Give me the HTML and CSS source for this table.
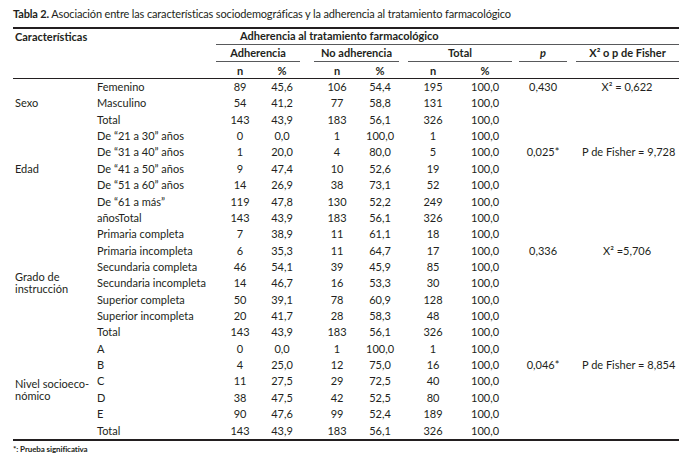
FILE: index.html
```html
<!DOCTYPE html>
<html lang="es">
<head>
<meta charset="utf-8">
<link rel="stylesheet" href="styles.css">
</head>
<body>
<div class="page">
  <p class="caption"><b>Tabla 2.</b> Asociación entre las características sociodemográficas y la adherencia al tratamiento farmacológico</p>
  <table class="tbl">
    <colgroup>
      <col class="c-group"><col class="c-sub"><col class="c-n1"><col class="c-p1"><col class="c-n2"><col class="c-p2"><col class="c-n3"><col class="c-p3"><col class="c-pv"><col class="c-fi">
    </colgroup>
    <thead>
      <tr class="h1">
        <th class="lab" colspan="2" rowspan="3">Características</th>
        <th class="span-all" colspan="8">Adherencia al tratamiento farmacológico</th>
      </tr>
      <tr class="h2">
        <th colspan="2"><div class="ul ul-a">Adherencia</div></th>
        <th colspan="2" class="n2"><div class="ul ul-b">No adherencia</div></th>
        <th colspan="2"><div class="ul ul-c">Total</div></th>
        <th><div class="ul ul-d"><i>p</i></div></th>
        <th class="fi"><div class="ul ul-e">X² o p de Fisher</div></th>
      </tr>
      <tr class="h3">
        <th>n</th><th>%</th><th class="n2">n</th><th>%</th><th>n</th><th>%</th><th></th><th class="fi"></th>
      </tr>
    </thead>
    <tbody>
      <tr><td class="grp" rowspan="3">Sexo</td><td class="sub">Femenino</td><td>89</td><td>45,6</td><td class="n2">106</td><td>54,4</td><td>195</td><td>100,0</td><td>0,430</td><td class="fi">X² = 0,622</td></tr>
      <tr><td class="sub">Masculino</td><td>54</td><td>41,2</td><td class="n2">77</td><td>58,8</td><td>131</td><td>100,0</td><td></td><td class="fi"></td></tr>
      <tr><td class="sub">Total</td><td>143</td><td>43,9</td><td class="n2">183</td><td>56,1</td><td>326</td><td>100,0</td><td></td><td class="fi"></td></tr>

      <tr><td class="grp" rowspan="5">Edad</td><td class="sub">De “21 a 30” años</td><td>0</td><td>0,0</td><td class="n2">1</td><td>100,0</td><td>1</td><td>100,0</td><td></td><td class="fi"></td></tr>
      <tr><td class="sub">De “31 a 40” años</td><td>1</td><td>20,0</td><td class="n2">4</td><td>80,0</td><td>5</td><td>100,0</td><td>0,025*</td><td class="fi">P de Fisher = 9,728</td></tr>
      <tr><td class="sub">De “41 a 50” años</td><td>9</td><td>47,4</td><td class="n2">10</td><td>52,6</td><td>19</td><td>100,0</td><td></td><td class="fi"></td></tr>
      <tr><td class="sub">De “51 a 60” años</td><td>14</td><td>26,9</td><td class="n2">38</td><td>73,1</td><td>52</td><td>100,0</td><td></td><td class="fi"></td></tr>
      <tr><td class="sub">De “61 a más”</td><td>119</td><td>47,8</td><td class="n2">130</td><td>52,2</td><td>249</td><td>100,0</td><td></td><td class="fi"></td></tr>
      <tr><td></td><td class="sub">añosTotal</td><td>143</td><td>43,9</td><td class="n2">183</td><td>56,1</td><td>326</td><td>100,0</td><td></td><td class="fi"></td></tr>

      <tr><td class="grp tight" rowspan="7">Grado de<br>instrucción</td><td class="sub">Primaria completa</td><td>7</td><td>38,9</td><td class="n2">11</td><td>61,1</td><td>18</td><td>100,0</td><td></td><td class="fi"></td></tr>
      <tr><td class="sub">Primaria incompleta</td><td>6</td><td>35,3</td><td class="n2">11</td><td>64,7</td><td>17</td><td>100,0</td><td>0,336</td><td class="fi">X² =5,706</td></tr>
      <tr><td class="sub">Secundaria completa</td><td>46</td><td>54,1</td><td class="n2">39</td><td>45,9</td><td>85</td><td>100,0</td><td></td><td class="fi"></td></tr>
      <tr><td class="sub">Secundaria incompleta</td><td>14</td><td>46,7</td><td class="n2">16</td><td>53,3</td><td>30</td><td>100,0</td><td></td><td class="fi"></td></tr>
      <tr><td class="sub">Superior completa</td><td>50</td><td>39,1</td><td class="n2">78</td><td>60,9</td><td>128</td><td>100,0</td><td></td><td class="fi"></td></tr>
      <tr><td class="sub">Superior incompleta</td><td>20</td><td>41,7</td><td class="n2">28</td><td>58,3</td><td>48</td><td>100,0</td><td></td><td class="fi"></td></tr>
      <tr><td class="sub">Total</td><td>143</td><td>43,9</td><td class="n2">183</td><td>56,1</td><td>326</td><td>100,0</td><td></td><td class="fi"></td></tr>

      <tr><td class="grp tight" rowspan="6">Nivel socioeco-<br>nómico</td><td class="sub">A</td><td>0</td><td>0,0</td><td class="n2">1</td><td>100,0</td><td>1</td><td>100,0</td><td></td><td class="fi"></td></tr>
      <tr><td class="sub">B</td><td>4</td><td>25,0</td><td class="n2">12</td><td>75,0</td><td>16</td><td>100,0</td><td>0,046*</td><td class="fi">P de Fisher = 8,854</td></tr>
      <tr><td class="sub">C</td><td>11</td><td>27,5</td><td class="n2">29</td><td>72,5</td><td>40</td><td>100,0</td><td></td><td class="fi"></td></tr>
      <tr><td class="sub">D</td><td>38</td><td>47,5</td><td class="n2">42</td><td>52,5</td><td>80</td><td>100,0</td><td></td><td class="fi"></td></tr>
      <tr><td class="sub">E</td><td>90</td><td>47,6</td><td class="n2">99</td><td>52,4</td><td>189</td><td>100,0</td><td></td><td class="fi"></td></tr>
      <tr><td class="sub">Total</td><td>143</td><td>43,9</td><td class="n2">183</td><td>56,1</td><td>326</td><td>100,0</td><td></td><td class="fi"></td></tr>
    </tbody>
  </table>
  <p class="note">*: Prueba significativa</p>
</div>
</body>
</html>
```

FILE: styles.css
```css
html, body {
  margin: 0;
  padding: 0;
  background: #ffffff;
}

body {
  font-family: "Lato", "Open Sans", sans-serif;
  color: #231f20;
  font-size: 11px;
}

.page {
  padding: 7px 12px 0 13px;
}

.caption {
  margin: 0;
  height: 20px;
  line-height: 14px;
  font-size: 11px;
  letter-spacing: -0.15px;
}

.caption b {
  font-weight: 700;
}

.tbl {
  width: 666px;
  table-layout: fixed;
  border-collapse: collapse;
  border-top: 2px solid #231f20;
  border-bottom: 2px solid #231f20;
}

.c-group { width: 82px; }
.c-sub { width: 121px; }
.c-n1 { width: 48px; }
.c-p1 { width: 36px; }
.c-n2 { width: 60px; }
.c-p2 { width: 40px; }
.c-n3 { width: 66px; }
.c-p3 { width: 38px; }
.c-pv { width: 78px; }
.c-fi { width: 97px; }

.tbl th,
.tbl td {
  padding: 0;
  text-align: center;
  white-space: nowrap;
  font-weight: 400;
}

.tbl th {
  font-weight: 700;
}

.tbl .n2 {
  padding-left: 14px;
}

.tbl .fi {
  padding-right: 7px;
}

.h1 th {
  height: 15px;
  line-height: 14px;
  vertical-align: top;
}

.tbl th.lab {
  text-align: left;
  padding-left: 2px;
  padding-top: 1px;
}

.tbl th.span-all {
  text-align: left;
  padding-left: 24px;
  border-bottom: 1.5px solid #58595b;
}

.h2 th {
  height: 17px;
  vertical-align: bottom;
}

.ul {
  line-height: 14px;
  border-bottom: 1.5px solid #58595b;
  padding-bottom: 1px;
}

.ul-b { margin-right: 1px; }
.ul-c { margin-left: 8px; margin-right: -8px; }
.ul-d { margin-left: 15px; margin-right: 15px; }
.ul-e { margin-left: -6px; margin-right: -7px; }

.h3 th {
  height: 16px;
  line-height: 15px;
}

.tbl thead {
  border-bottom: 1px solid #231f20;
}

.tbl td {
  height: 16.36px;
  line-height: 16.36px;
}

.tbl td.grp {
  text-align: left;
  padding-left: 2px;
  vertical-align: middle;
}

.tbl td.tight {
  line-height: 12px;
}

.tbl td.sub {
  text-align: left;
  padding-left: 2px;
}

.note {
  margin: 3px 0 0 0;
  font-size: 8px;
  font-weight: 700;
  letter-spacing: -0.1px;
}
```
